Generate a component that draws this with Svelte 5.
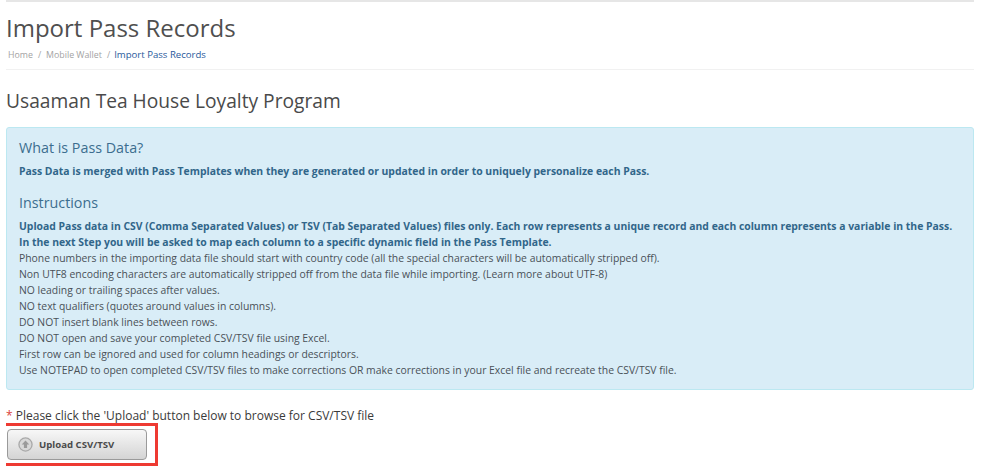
<script>
	const rules = [
		'Phone numbers in the importing data file should start with country code (all the special characters will be automatically stripped off).',
		'Non UTF8 encoding characters are automatically stripped off from the data file while importing. (Learn more about UTF-8)',
		'NO leading or trailing spaces after values.',
		'NO text qualifiers (quotes around values in columns).',
		'DO NOT insert blank lines between rows.',
		'DO NOT open and save your completed CSV/TSV file using Excel.',
		'First row can be ignored and used for column headings or descriptors.',
		'Use NOTEPAD to open completed CSV/TSV files to make corrections OR make corrections in your Excel file and recreate the CSV/TSV file.'
	];
</script>

<div class="page">
	<header class="head">
		<h1>Import Pass Records</h1>
		<ul class="crumbs">
			<li>Home</li>
			<li class="sep">/</li>
			<li>Mobile Wallet</li>
			<li class="sep">/</li>
			<li class="current">Import Pass Records</li>
		</ul>
	</header>

	<h2>Usaaman Tea House Loyalty Program</h2>

	<section class="info">
		<h3>What is Pass Data?</h3>
		<p class="bold lead">Pass Data is merged with Pass Templates when they are generated or updated in order to uniquely personalize each Pass.</p>
		<h3 class="second">Instructions</h3>
		<p class="bold">Upload Pass data in CSV (Comma Separated Values) or TSV (Tab Separated Values) files only. Each row represents a unique record and each column represents a variable in the Pass.</p>
		<p class="bold">In the next Step you will be asked to map each column to a specific dynamic field in the Pass Template.</p>
		{#each rules as rule}
			<p>{rule}</p>
		{/each}
	</section>

	<p class="hint"><span class="star">*</span> Please click the 'Upload' button below to browse for CSV/TSV file</p>

	<div class="highlight">
		<button class="upload">
			<svg width="15" height="15" viewBox="0 0 16 16">
				<circle cx="8" cy="8" r="7" fill="#d8d8d8" stroke="#a9a9a9" stroke-width="1.4" />
				<path d="M8 3.6 L12 8 H9.7 V11.6 H6.3 V8 H4 Z" fill="#9a9a9a" />
			</svg>
			Upload CSV/TSV
		</button>
	</div>
</div>

<style>
	:global(body) {
		background: #fff;
	}
	.page {
		width: 968px;
		margin-left: 6px;
		height: 471px;
		overflow: hidden;
		font-family: "Open Sans", sans-serif;
		border-top: 2px solid #e6e6e6;
		box-sizing: border-box;
	}
	.head {
		padding-top: 11px;
		height: 56px;
		border-bottom: 1px solid #f1f1f1;
	}
	h1 {
		margin: 0;
		font-size: 24px;
		line-height: 30px;
		font-weight: 400;
		color: #4f4f4f;
	}
	.crumbs {
		display: flex;
		align-items: baseline;
		gap: 5px;
		list-style: none;
		margin: 5px 0 0 2px;
		padding: 0;
		font-size: 8.8px;
		line-height: 14px;
		color: #a3a3a3;
	}
	.crumbs .current {
		margin-left: -1px;
		font-size: 9.6px;
		color: #2a5a9c;
	}
	h2 {
		margin: 18px 0 0;
		font-size: 19.2px;
		line-height: 26px;
		font-weight: 400;
		color: #4a4a4a;
	}
	.info {
		margin-top: 13px;
		height: 263px;
		box-sizing: border-box;
		padding: 10px 12px 0;
		background: #d9edf7;
		border: 1px solid #bce8f1;
		border-radius: 3px;
		color: #4a5157;
	}
	h3 {
		margin: 0;
		font-size: 14.3px;
		line-height: 20px;
		font-weight: 400;
		color: #3c6e8f;
	}
	h3.second {
		margin-top: 14px;
	}
	.info p {
		margin: 0;
		font-size: 10.4px;
		line-height: 16px;
		white-space: nowrap;
	}
	.info p.lead {
		margin-top: 5px;
	}
	.info h3.second + p {
		margin-top: 5px;
	}
	.info p.bold {
		font-weight: 700;
		color: #31668a;
	}
	.hint {
		margin: 18px 0 0;
		font-size: 12px;
		line-height: 15px;
		color: #3a3a3a;
	}
	.star {
		color: #d9433a;
	}
	.highlight {
		width: fit-content;
		margin-left: -3px;
		padding: 3px 8px 3px 1px;
		border: 3px solid #ee3a32;
	}
	.upload {
		display: flex;
		align-items: center;
		gap: 6px;
		width: 140px;
		height: 31px;
		padding: 0 0 0 10px;
		border: 1px solid #9a9a9a;
		border-radius: 4px;
		background: linear-gradient(#f7f7f7, #d4d4d4);
		font-family: inherit;
		font-size: 9.6px;
		font-weight: 700;
		color: #4a4a4a;
	}
</style>
